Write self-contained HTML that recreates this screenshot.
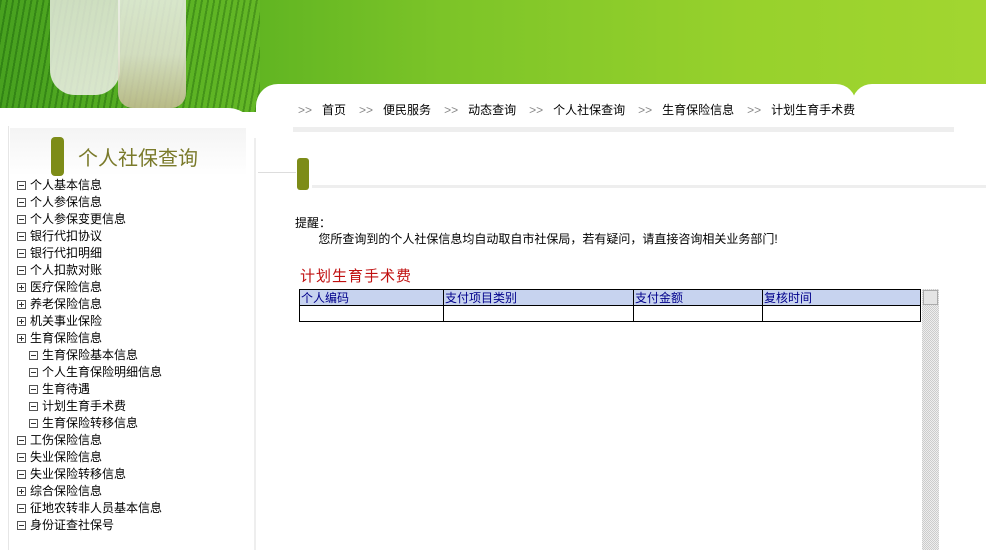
<!DOCTYPE html>
<html><head><meta charset="utf-8"><style>
*{margin:0;padding:0;box-sizing:border-box}
body{width:986px;height:550px;overflow:hidden;position:relative;background:#fff;font-family:"Liberation Sans","Noto Sans CJK SC","WenQuanYi Zen Hei",sans-serif;font-size:12px;color:#000}
.banner{position:absolute;left:0;top:0;width:986px;height:112px;background:linear-gradient(90deg,#3f9a1a 0%,#58b020 20%,#7cc428 45%,#97d12c 75%,#a2d630 100%)}
.grass{position:absolute;left:0;top:0;width:260px;height:112px;background:repeating-linear-gradient(100deg,rgba(20,80,10,.3) 0 2px,rgba(120,200,60,.15) 2px 6px)}
.k1{position:absolute;left:50px;top:0;width:70px;height:95px;background:linear-gradient(180deg,#e4e8dc,#f1f1ea);border-radius:0 0 25px 25px;opacity:.85}
.k2{position:absolute;left:118px;top:0;width:68px;height:108px;background:linear-gradient(180deg,#eef0e8,#e8e6da 50%,#c9bd98);border-radius:0 0 15px 15px;opacity:.85}
.leftp{position:absolute;left:0;top:108px;width:256px;height:442px;background:#fff;border-top-right-radius:28px}
.leftp:before{content:"";position:absolute;left:8px;top:18px;width:1px;height:424px;background:#e6e6e6}
.leftp:after{content:"";position:absolute;left:254px;top:30px;width:2px;height:412px;background:#eee}
.rightp{position:absolute;left:256px;top:84px;width:600px;height:466px;background:#fff;border-top-left-radius:22px;border-top-right-radius:20px}
.rightp2{position:absolute;left:852px;top:84px;width:134px;height:466px;background:#fff;border-top-left-radius:20px}
.title{position:absolute;left:10px;top:128px;width:236px;height:48px;background:linear-gradient(180deg,#f4f4f4,#fff)}
.bar{position:absolute;background:#7d8c18;border-radius:4px}
.ttext{position:absolute;left:78px;top:142px;font-size:20px;color:#7a7a2a}
.menu{position:absolute;left:17px;top:177px;line-height:17px;font-size:12px}
.menu div{white-space:nowrap}
.menu .s{padding-left:12px}
.b{display:inline-block;width:9px;height:9px;border:1px solid #555;position:relative;margin-right:4px;vertical-align:-1px}
.b:before{content:"";position:absolute;left:1px;top:3px;width:5px;height:1px;background:#333}
.p:after{content:"";position:absolute;left:3px;top:1px;width:1px;height:5px;background:#333}
.crumb{position:absolute;left:298px;top:101px;font-size:12px;white-space:nowrap}
.crumb i{font-style:normal;color:#888;margin:0 10px 0 0}
.crumb span{margin-right:13px}
.line1{position:absolute;left:293px;top:127px;width:661px;height:5px;background:#eee}
.line2{position:absolute;left:258px;top:172px;width:38px;height:1px;background:#ddd}
.line3{position:absolute;left:312px;top:185px;width:674px;height:3px;background:#eee}
.tip{position:absolute;left:295px;top:215px;line-height:16px}
.red{position:absolute;left:300px;top:265px;font-size:15px;color:#c01010;letter-spacing:1px}
table{position:absolute;left:299px;top:289px;width:622px;border-collapse:collapse}
td{border:1px solid #000;height:16px;font-size:12px;color:#00008b;padding:0 1px;line-height:14px}
tr.h td{background:#c7d3ef;height:16px}
.sb{position:absolute;left:922px;top:289px;width:17px;height:261px;background:repeating-conic-gradient(#ccc 0 25%,#eee 0 50%) 0 0/2px 2px}
.sbb{position:absolute;left:923px;top:290px;width:15px;height:15px;background:#e4e4e4;border:1px solid #aaa}
</style></head><body>
<div class="banner"><div class="grass"></div><div class="k1"></div><div class="k2"></div></div>
<div class="rightp"></div><div class="rightp2"></div>
<div class="leftp"></div>
<div class="title"></div>
<div class="bar" style="left:51px;top:137px;width:13px;height:39px"></div>
<div class="ttext">个人社保查询</div>
<div class="menu">
<div><span class="b"></span>个人基本信息</div>
<div><span class="b"></span>个人参保信息</div>
<div><span class="b"></span>个人参保变更信息</div>
<div><span class="b"></span>银行代扣协议</div>
<div><span class="b"></span>银行代扣明细</div>
<div><span class="b"></span>个人扣款对账</div>
<div><span class="b p"></span>医疗保险信息</div>
<div><span class="b p"></span>养老保险信息</div>
<div><span class="b p"></span>机关事业保险</div>
<div><span class="b p"></span>生育保险信息</div>
<div class="s"><span class="b"></span>生育保险基本信息</div>
<div class="s"><span class="b"></span>个人生育保险明细信息</div>
<div class="s"><span class="b"></span>生育待遇</div>
<div class="s"><span class="b"></span>计划生育手术费</div>
<div class="s"><span class="b"></span>生育保险转移信息</div>
<div><span class="b"></span>工伤保险信息</div>
<div><span class="b"></span>失业保险信息</div>
<div><span class="b"></span>失业保险转移信息</div>
<div><span class="b p"></span>综合保险信息</div>
<div><span class="b"></span>征地农转非人员基本信息</div>
<div><span class="b"></span>身份证查社保号</div>
</div>
<div class="crumb"><i>&gt;&gt;</i><span>首页</span><i>&gt;&gt;</i><span>便民服务</span><i>&gt;&gt;</i><span>动态查询</span><i>&gt;&gt;</i><span>个人社保查询</span><i>&gt;&gt;</i><span>生育保险信息</span><i>&gt;&gt;</i><span>计划生育手术费</span></div>
<div class="line1"></div>
<div class="line2"></div>
<div class="bar" style="left:297px;top:158px;width:12px;height:32px;border-radius:3px"></div>
<div class="line3"></div>
<div class="tip">提醒：<br>&nbsp;&nbsp;&nbsp;&nbsp;&nbsp;&nbsp;&nbsp;您所查询到的个人社保信息均自动取自市社保局，若有疑问，请直接咨询相关业务部门!</div>
<div class="red">计划生育手术费</div>
<table><tr class="h"><td style="width:144px">个人编码</td><td style="width:190px">支付项目类别</td><td style="width:129px">支付金额</td><td>复核时间</td></tr><tr><td></td><td></td><td></td><td></td></tr></table>
<div class="sb"></div><div class="sbb"></div>
</body></html>
